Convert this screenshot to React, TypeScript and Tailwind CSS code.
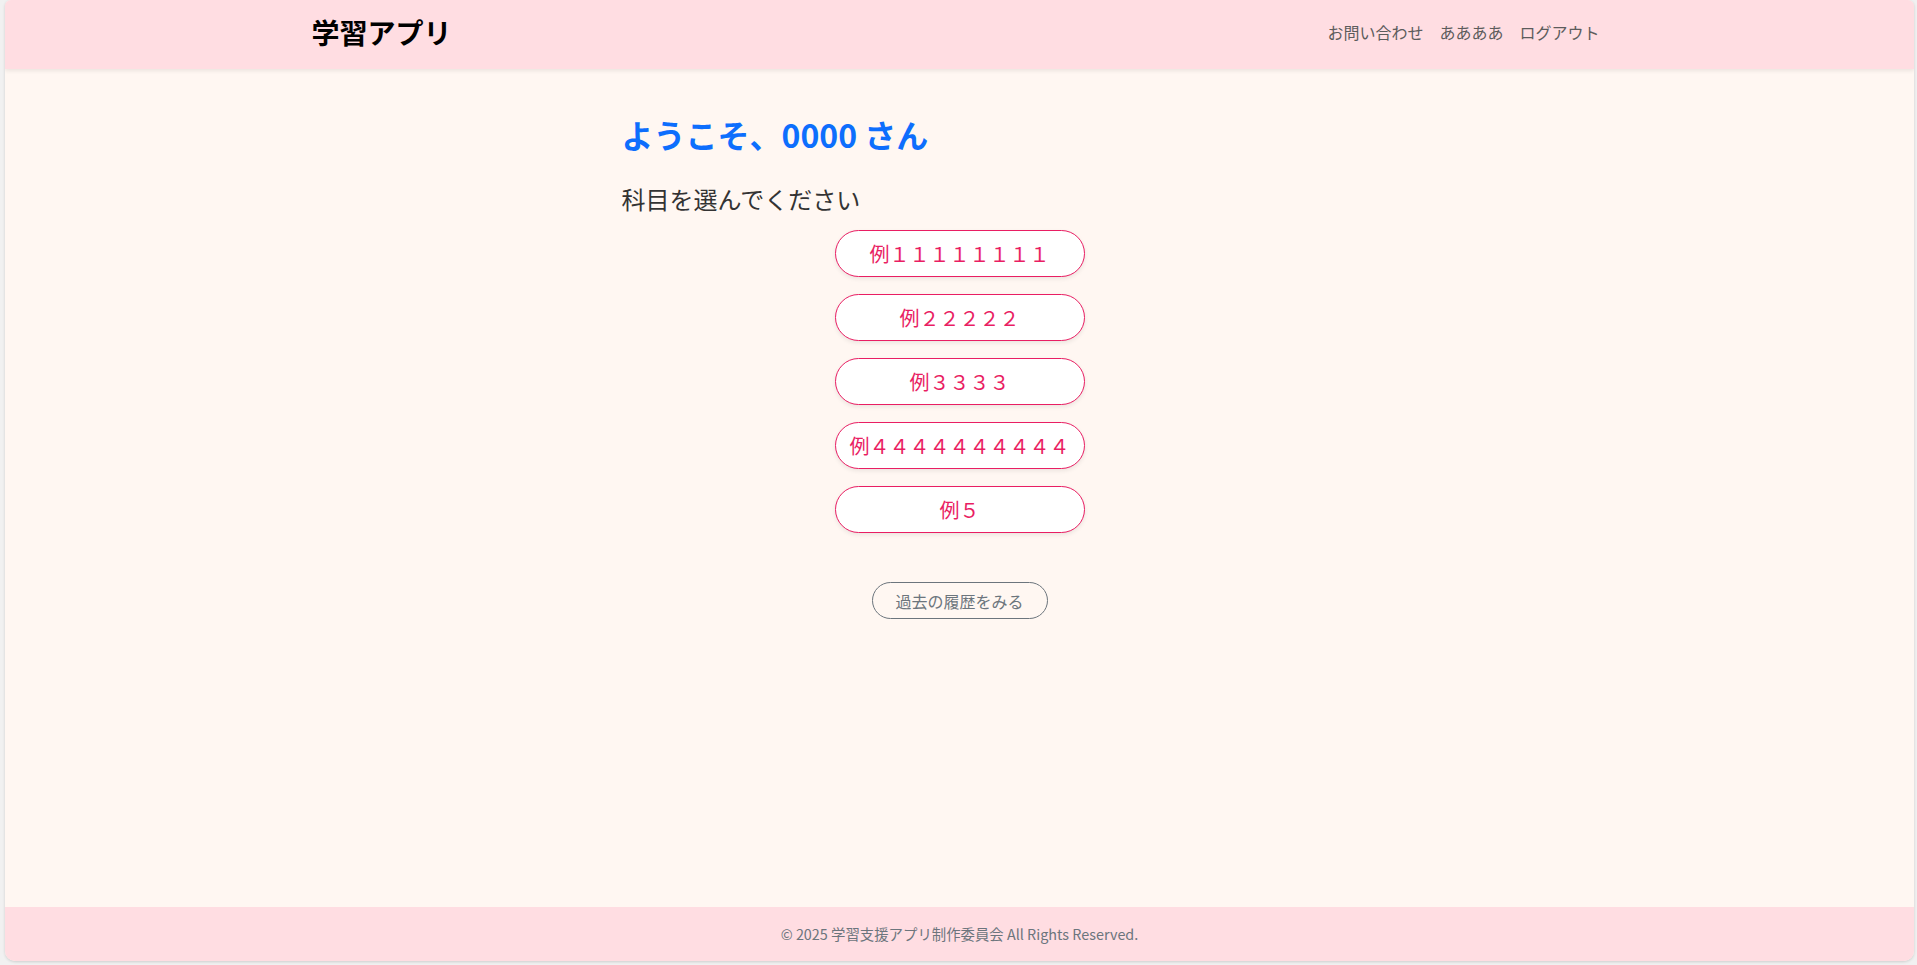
import React from "react";

const font = { fontFamily: '"Noto Sans CJK JP", "Noto Sans", sans-serif' };

const subjects = [
  "例１１１１１１１１",
  "例２２２２２",
  "例３３３３",
  "例４４４４４４４４４４",
  "例５",
];

export default function App() {
  return (
    <div className="h-screen w-full bg-[#f1f1f1] pl-[5px] pr-[3px] pb-[4px]" style={font}>
      <div className="flex h-full flex-col overflow-hidden rounded-b-[10px] rounded-t-[6px] bg-[#fff7f2] shadow-[0_1px_3px_rgba(0,0,0,0.15)]">
        <header className="relative z-10 h-[69px] shrink-0 bg-[#ffdde2] pb-[6px] shadow-[0_2px_4px_rgba(0,0,0,0.08)]">
          <div className="mx-auto flex h-full max-w-[1320px] items-center justify-between px-3">
            <span className="text-[28px] font-bold leading-none text-black">学習アプリ</span>
            <nav className="flex items-center text-[16px] text-[#5c5c5c]">
              <a className="px-2">お問い合わせ</a>
              <a className="px-2">ああああ</a>
              <a className="px-2">ログアウト</a>
            </nav>
          </div>
        </header>
        <main className="flex-1 pt-[46px]">
          <div className="mx-auto max-w-[700px] px-3">
            <h2 className="mb-[31px] text-[32px] font-bold leading-[38px] text-[#0d6efd]">
              ようこそ、0000 さん
            </h2>
            <h4 className="text-[24px] leading-[29px] text-[#333333]">科目を選んでください</h4>
            <div className="mt-[17px] flex flex-col items-center gap-[17px]">
              {subjects.map((s) => (
                <button
                  key={s}
                  className="flex h-[47px] w-[250px] items-center justify-center rounded-full border border-[#e91e63] bg-white text-[20px] text-[#e91e63] shadow-[0_2px_4px_rgba(0,0,0,0.08)]"
                >
                  {s}
                </button>
              ))}
            </div>
            <div className="mt-[49px] flex justify-center">
              <button className="flex h-[37px] w-[176px] items-center justify-center rounded-full border border-[#6c757d] text-[16px] text-[#6c757d]">
                過去の履歴をみる
              </button>
            </div>
          </div>
        </main>
        <footer className="flex h-[54px] shrink-0 items-center justify-center bg-[#ffdde2] text-[14.4px] text-[#6c757d]">
          © 2025 学習支援アプリ制作委員会 All Rights Reserved.
        </footer>
      </div>
    </div>
  );
}
